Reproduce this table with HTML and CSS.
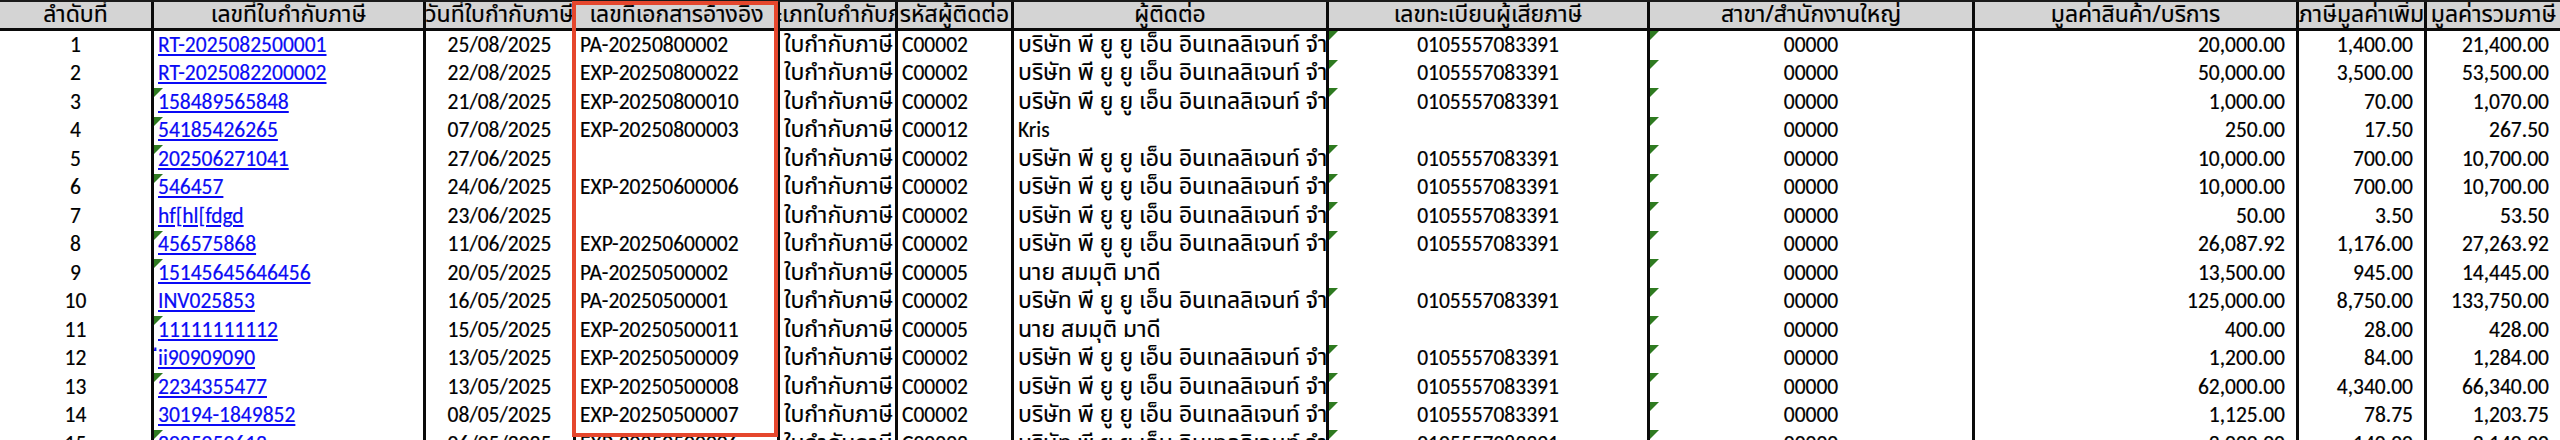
FILE: index.html
```html
<!DOCTYPE html>
<html lang="th">
<head>
<meta charset="utf-8">
<title>ใบกำกับภาษี</title>
<link rel="stylesheet" href="styles.css">
</head>
<body>
<div class="sheet">
  <div class="row head">
    <div class="c"><span class="th">ลำดับที่</span></div>
    <div class="c"><span class="th">เลขที่ใบกำกับภาษี</span></div>
    <div class="c"><span class="th">วันที่ใบกำกับภาษี</span></div>
    <div class="c"><span class="th">เลขที่เอกสารอ้างอิง</span></div>
    <div class="c"><span class="th">ประเภทใบกำกับภาษี</span></div>
    <div class="c"><span class="th">รหัสผู้ติดต่อ</span></div>
    <div class="c"><span class="th">ผู้ติดต่อ</span></div>
    <div class="c"><span class="th">เลขทะเบียนผู้เสียภาษี</span></div>
    <div class="c"><span class="th">สาขา/สำนักงานใหญ่</span></div>
    <div class="c"><span class="th">มูลค่าสินค้า/บริการ</span></div>
    <div class="c"><span class="th">ภาษีมูลค่าเพิ่ม</span></div>
    <div class="c"><span class="th">มูลค่ารวมภาษี</span></div>
  </div>

  <div class="row">
    <div class="c">1</div><div class="l"><a href="#">RT-2025082500001</a></div><div class="c">25/08/2025</div><div class="l">PA-20250800002</div><div class="l"><span class="th">ใบกำกับภาษี</span></div><div class="l">C00002</div><div class="l"><span class="th">บริษัท พี ยู ยู เอ็น อินเทลลิเจนท์ จำกัด</span></div><div class="c t">0105557083391</div><div class="c t">00000</div><div class="r">20,000.00</div><div class="r">1,400.00</div><div class="r">21,400.00</div>
  </div>
  <div class="row">
    <div class="c">2</div><div class="l"><a href="#">RT-2025082200002</a></div><div class="c">22/08/2025</div><div class="l">EXP-20250800022</div><div class="l"><span class="th">ใบกำกับภาษี</span></div><div class="l">C00002</div><div class="l"><span class="th">บริษัท พี ยู ยู เอ็น อินเทลลิเจนท์ จำกัด</span></div><div class="c t">0105557083391</div><div class="c t">00000</div><div class="r">50,000.00</div><div class="r">3,500.00</div><div class="r">53,500.00</div>
  </div>
  <div class="row">
    <div class="c">3</div><div class="l t"><a href="#">158489565848</a></div><div class="c">21/08/2025</div><div class="l">EXP-20250800010</div><div class="l"><span class="th">ใบกำกับภาษี</span></div><div class="l">C00002</div><div class="l"><span class="th">บริษัท พี ยู ยู เอ็น อินเทลลิเจนท์ จำกัด</span></div><div class="c t">0105557083391</div><div class="c t">00000</div><div class="r">1,000.00</div><div class="r">70.00</div><div class="r">1,070.00</div>
  </div>
  <div class="row">
    <div class="c">4</div><div class="l t"><a href="#">54185426265</a></div><div class="c">07/08/2025</div><div class="l">EXP-20250800003</div><div class="l"><span class="th">ใบกำกับภาษี</span></div><div class="l">C00012</div><div class="l">Kris</div><div class="c"></div><div class="c t">00000</div><div class="r">250.00</div><div class="r">17.50</div><div class="r">267.50</div>
  </div>
  <div class="row">
    <div class="c">5</div><div class="l t"><a href="#">202506271041</a></div><div class="c">27/06/2025</div><div class="l"></div><div class="l"><span class="th">ใบกำกับภาษี</span></div><div class="l">C00002</div><div class="l"><span class="th">บริษัท พี ยู ยู เอ็น อินเทลลิเจนท์ จำกัด</span></div><div class="c t">0105557083391</div><div class="c t">00000</div><div class="r">10,000.00</div><div class="r">700.00</div><div class="r">10,700.00</div>
  </div>
  <div class="row">
    <div class="c">6</div><div class="l t"><a href="#">546457</a></div><div class="c">24/06/2025</div><div class="l">EXP-20250600006</div><div class="l"><span class="th">ใบกำกับภาษี</span></div><div class="l">C00002</div><div class="l"><span class="th">บริษัท พี ยู ยู เอ็น อินเทลลิเจนท์ จำกัด</span></div><div class="c t">0105557083391</div><div class="c t">00000</div><div class="r">10,000.00</div><div class="r">700.00</div><div class="r">10,700.00</div>
  </div>
  <div class="row">
    <div class="c">7</div><div class="l"><a href="#">hf[hl[fdgd</a></div><div class="c">23/06/2025</div><div class="l"></div><div class="l"><span class="th">ใบกำกับภาษี</span></div><div class="l">C00002</div><div class="l"><span class="th">บริษัท พี ยู ยู เอ็น อินเทลลิเจนท์ จำกัด</span></div><div class="c t">0105557083391</div><div class="c t">00000</div><div class="r">50.00</div><div class="r">3.50</div><div class="r">53.50</div>
  </div>
  <div class="row">
    <div class="c">8</div><div class="l t"><a href="#">456575868</a></div><div class="c">11/06/2025</div><div class="l">EXP-20250600002</div><div class="l"><span class="th">ใบกำกับภาษี</span></div><div class="l">C00002</div><div class="l"><span class="th">บริษัท พี ยู ยู เอ็น อินเทลลิเจนท์ จำกัด</span></div><div class="c t">0105557083391</div><div class="c t">00000</div><div class="r">26,087.92</div><div class="r">1,176.00</div><div class="r">27,263.92</div>
  </div>
  <div class="row">
    <div class="c">9</div><div class="l t"><a href="#">15145645646456</a></div><div class="c">20/05/2025</div><div class="l">PA-20250500002</div><div class="l"><span class="th">ใบกำกับภาษี</span></div><div class="l">C00005</div><div class="l"><span class="th">นาย สมมุติ มาดี</span></div><div class="c"></div><div class="c t">00000</div><div class="r">13,500.00</div><div class="r">945.00</div><div class="r">14,445.00</div>
  </div>
  <div class="row">
    <div class="c">10</div><div class="l"><a href="#">INV025853</a></div><div class="c">16/05/2025</div><div class="l">PA-20250500001</div><div class="l"><span class="th">ใบกำกับภาษี</span></div><div class="l">C00002</div><div class="l"><span class="th">บริษัท พี ยู ยู เอ็น อินเทลลิเจนท์ จำกัด</span></div><div class="c t">0105557083391</div><div class="c t">00000</div><div class="r">125,000.00</div><div class="r">8,750.00</div><div class="r">133,750.00</div>
  </div>
  <div class="row">
    <div class="c">11</div><div class="l t"><a href="#">11111111112</a></div><div class="c">15/05/2025</div><div class="l">EXP-20250500011</div><div class="l"><span class="th">ใบกำกับภาษี</span></div><div class="l">C00005</div><div class="l"><span class="th">นาย สมมุติ มาดี</span></div><div class="c"></div><div class="c t">00000</div><div class="r">400.00</div><div class="r">28.00</div><div class="r">428.00</div>
  </div>
  <div class="row">
    <div class="c">12</div><div class="l"><a href="#">&#x0E35;ii90909090</a></div><div class="c">13/05/2025</div><div class="l">EXP-20250500009</div><div class="l"><span class="th">ใบกำกับภาษี</span></div><div class="l">C00002</div><div class="l"><span class="th">บริษัท พี ยู ยู เอ็น อินเทลลิเจนท์ จำกัด</span></div><div class="c t">0105557083391</div><div class="c t">00000</div><div class="r">1,200.00</div><div class="r">84.00</div><div class="r">1,284.00</div>
  </div>
  <div class="row">
    <div class="c">13</div><div class="l t"><a href="#">2234355477</a></div><div class="c">13/05/2025</div><div class="l">EXP-20250500008</div><div class="l"><span class="th">ใบกำกับภาษี</span></div><div class="l">C00002</div><div class="l"><span class="th">บริษัท พี ยู ยู เอ็น อินเทลลิเจนท์ จำกัด</span></div><div class="c t">0105557083391</div><div class="c t">00000</div><div class="r">62,000.00</div><div class="r">4,340.00</div><div class="r">66,340.00</div>
  </div>
  <div class="row">
    <div class="c">14</div><div class="l"><a href="#">30194-1849852</a></div><div class="c">08/05/2025</div><div class="l">EXP-20250500007</div><div class="l"><span class="th">ใบกำกับภาษี</span></div><div class="l">C00002</div><div class="l"><span class="th">บริษัท พี ยู ยู เอ็น อินเทลลิเจนท์ จำกัด</span></div><div class="c t">0105557083391</div><div class="c t">00000</div><div class="r">1,125.00</div><div class="r">78.75</div><div class="r">1,203.75</div>
  </div>
  <div class="row">
    <div class="c">15</div><div class="l t"><a href="#">2025050612</a></div><div class="c">06/05/2025</div><div class="l">EXP-20250500006</div><div class="l"><span class="th">ใบกำกับภาษี</span></div><div class="l">C00002</div><div class="l"><span class="th">บริษัท พี ยู ยู เอ็น อินเทลลิเจนท์ จำกัด</span></div><div class="c t">0105557083391</div><div class="c t">00000</div><div class="r">2,000.00</div><div class="r">140.00</div><div class="r">2,140.00</div>
  </div>

  <div class="mark"></div>
</div>
</body>
</html>
```
FILE: styles.css
```css
html, body {
  margin: 0;
  padding: 0;
  background: #fff;
  overflow: hidden;
}
body {
  width: 2560px;
  height: 440px;
  font-family: Carlito, "Liberation Sans", "Noto Sans Thai", "Noto Sans", sans-serif;
  font-size: 21.5px;
  color: #000;
  -webkit-text-stroke: 0.2px currentColor;
}
.sheet {
  position: relative;
  width: 2560px;
  height: 440px;
  overflow: hidden;
}
.row {
  display: grid;
  grid-template-columns: 151px 272px 150px 204px 118px 116px 315px 321px 325px 324px 128px 136px;
  height: 28.5px;
}
.row > div {
  box-sizing: border-box;
  overflow: hidden;
  white-space: nowrap;
  display: flex;
  align-items: center;
  line-height: 1;
  position: relative;
}
.row > div + div {
  border-left: 3px solid #0a0a0a;
}
.row .c { justify-content: center; }
.row .l { justify-content: flex-start; padding-left: 4px; }
.row .r { justify-content: flex-end; padding-right: 11px; }
.th {
  font-family: "Noto Sans Thai", Carlito, "Liberation Sans", sans-serif;
  font-size: 23px;
  line-height: 1;
  flex: none;
}
.head {
  height: 31px;
  box-sizing: border-box;
  background: #d4d4d4;
  border-top: 2px solid #1a1a1a;
  border-bottom: 3px solid #0a0a0a;
}
.head > div { padding: 0; }
a {
  color: #0a0af5;
  text-decoration: underline;
  text-decoration-thickness: 1.5px;
  text-underline-offset: 2px;
}
.t::before {
  content: "";
  position: absolute;
  top: 0;
  left: 0;
  border-top: 9px solid #2e7a20;
  border-right: 9px solid transparent;
}
.mark {
  position: absolute;
  left: 572px;
  top: 1px;
  width: 206px;
  height: 436px;
  box-sizing: border-box;
  border: 4px solid #e5472d;
  pointer-events: none;
}
```
